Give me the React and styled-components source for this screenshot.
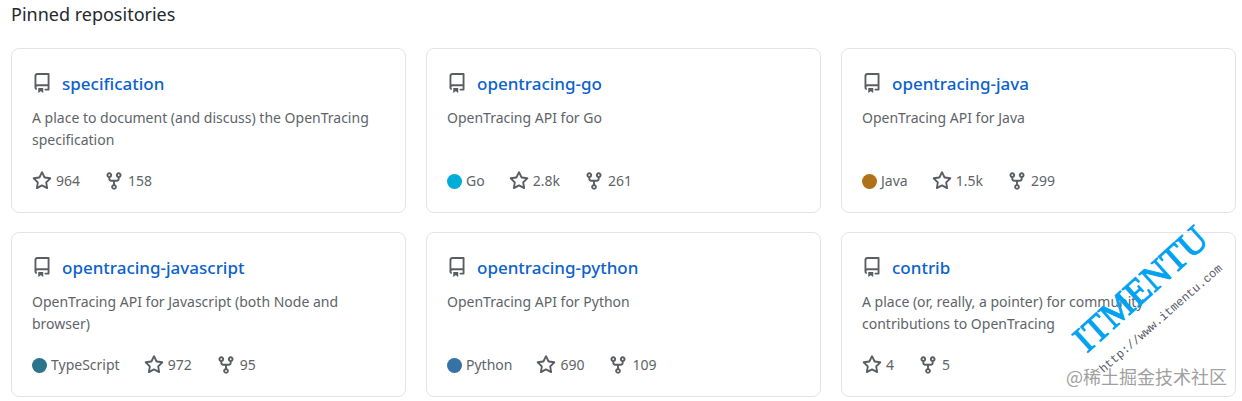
import React from "react";
import styled, { createGlobalStyle } from "styled-components";

const repos = [
  {
    name: "specification",
    description: "A place to document (and discuss) the OpenTracing specification",
    stars: "964",
    forks: "158",
  },
  {
    name: "opentracing-go",
    description: "OpenTracing API for Go",
    language: "Go",
    color: "#00add8",
    stars: "2.8k",
    forks: "261",
  },
  {
    name: "opentracing-java",
    description: "OpenTracing API for Java",
    language: "Java",
    color: "#b07219",
    stars: "1.5k",
    forks: "299",
  },
  {
    name: "opentracing-javascript",
    description: "OpenTracing API for Javascript (both Node and browser)",
    language: "TypeScript",
    color: "#2b7489",
    stars: "972",
    forks: "95",
  },
  {
    name: "opentracing-python",
    description: "OpenTracing API for Python",
    language: "Python",
    color: "#3572a5",
    stars: "690",
    forks: "109",
  },
  {
    name: "contrib",
    description:
      "A place (or, really, a pointer) for community contributions to OpenTracing",
    stars: "4",
    forks: "5",
  },
];

const icons = {
  repo: "M2 2.5A2.5 2.5 0 014.5 0h8.75a.75.75 0 01.75.75v12.5a.75.75 0 01-.75.75h-2.5a.75.75 0 110-1.5h1.75v-2h-8a1 1 0 00-.714 1.7.75.75 0 01-1.072 1.05A2.495 2.495 0 012 11.5v-9zm10.5-1V9h-8c-.356 0-.694.074-1 .208V2.5a1 1 0 011-1h8zM5 12.25v3.25a.25.25 0 00.4.2l1.45-1.087a.25.25 0 01.3 0L8.6 15.7a.25.25 0 00.4-.2v-3.25a.25.25 0 00-.25-.25h-3.5a.25.25 0 00-.25.25z",
  star: "M8 .25a.75.75 0 01.673.418l1.882 3.815 4.21.612a.75.75 0 01.416 1.279l-3.046 2.97.719 4.192a.75.75 0 01-1.088.791L8 12.347l-3.766 1.98a.75.75 0 01-1.088-.79l.72-4.194L.818 6.374a.75.75 0 01.416-1.28l4.21-.611L7.327.668A.75.75 0 018 .25zm0 2.445L6.615 5.5a.75.75 0 01-.564.41l-3.097.45 2.24 2.184a.75.75 0 01.216.664l-.528 3.084 2.769-1.456a.75.75 0 01.698 0l2.77 1.456-.53-3.084a.75.75 0 01.216-.664l2.24-2.183-3.096-.45a.75.75 0 01-.564-.41L8 2.694z",
  fork: "M5 3.25a.75.75 0 11-1.5 0 .75.75 0 011.5 0zm0 2.122a2.25 2.25 0 10-1.5 0v.878A2.25 2.25 0 005.75 8.5h1.5v2.128a2.251 2.251 0 101.5 0V8.5h1.5a2.25 2.25 0 002.25-2.25v-.878a2.25 2.25 0 10-1.5 0v.878a.75.75 0 01-.75.75h-4.5A.75.75 0 015 6.25v-.878zm3.75 7.378a.75.75 0 11-1.5 0 .75.75 0 011.5 0zm3-8.75a.75.75 0 100-1.5.75.75 0 000 1.5z",
};

function Icon({ name }) {
  return (
    <IconStyled viewBox="0 0 16 16" aria-hidden="true">
      <path fillRule="evenodd" d={icons[name]} />
    </IconStyled>
  );
}

function RepoCard({ repo }) {
  return (
    <Card>
      <CardHeader>
        <Icon name="repo" />
        <RepoLink href="#">{repo.name}</RepoLink>
      </CardHeader>
      <Description>{repo.description}</Description>
      <Stats>
        {repo.language && (
          <Language>
            <Dot $color={repo.color} />
            {repo.language}
          </Language>
        )}
        <StatLink href="#" aria-label={`${repo.stars} stars`}>
          <Icon name="star" />
          {repo.stars}
        </StatLink>
        <StatLink href="#" aria-label={`${repo.forks} forks`}>
          <Icon name="fork" />
          {repo.forks}
        </StatLink>
      </Stats>
    </Card>
  );
}

function App() {
  return (
    <Page>
      <GlobalStyle />
      <Heading>Pinned repositories</Heading>
      <Grid>
        {repos.map((repo) => (
          <RepoCard key={repo.name} repo={repo} />
        ))}
      </Grid>
      <Brand>ITMENTU</Brand>
      <BrandUrl>http://www.itmentu.com</BrandUrl>
      <Community>@稀土掘金技术社区</Community>
    </Page>
  );
}

const GlobalStyle = createGlobalStyle`
  * {
    box-sizing: border-box;
  }
  body {
    margin: 0;
    background: #fff;
    color: #24292e;
    font-family: "Noto Sans", "Open Sans", sans-serif;
    font-size: 14px;
  }
`;

const Page = styled.main`
  position: relative;
  padding: 0 6px 4px 11px;
  overflow: hidden;
`;

const Heading = styled.h2`
  margin: 0 0 20px;
  font-size: 18px;
  font-weight: 400;
  line-height: 28px;
`;

const Grid = styled.ol`
  display: grid;
  grid-template-columns: repeat(3, 1fr);
  gap: 19px 20px;
  margin: 0;
  padding: 0;
  list-style: none;
`;

const Card = styled.li`
  display: flex;
  flex-direction: column;
  padding: 20px;
  border: 1px solid #e1e4e8;
  border-radius: 8px;
`;

const CardHeader = styled.div`
  display: flex;
  align-items: center;
  gap: 10px;
  height: 28px;
  margin-bottom: 10px;
`;

const RepoLink = styled.a`
  color: #0b62ce;
  font-size: 17px;
  font-weight: 500;
  text-decoration: none;
`;

const Description = styled.p`
  flex: 1;
  margin: 0 0 19px;
  color: #606469;
  line-height: 22px;
`;

const Stats = styled.div`
  display: flex;
  align-items: center;
  gap: 24px;
  color: #606469;
  line-height: 22px;
`;

const Language = styled.span`
  display: flex;
  align-items: center;
  gap: 4px;
`;

const Dot = styled.span`
  width: 15px;
  height: 15px;
  border-radius: 50%;
  background: ${(props) => props.$color};
`;

const StatLink = styled.a`
  display: flex;
  align-items: center;
  gap: 4px;
  color: inherit;
  text-decoration: none;
`;

const IconStyled = styled.svg`
  flex: none;
  width: 20px;
  height: 20px;
  fill: #5a5e63;
`;

const Overlay = styled.span`
  position: absolute;
  line-height: 1;
  white-space: nowrap;
  pointer-events: none;
`;

const Brand = styled(Overlay)`
  right: 19px;
  bottom: 94px;
  color: #00a2f2;
  font-family: "Liberation Serif", serif;
  font-size: 37px;
  -webkit-text-stroke: 1px #00a2f2;
  transform: rotate(-42deg);
`;

const BrandUrl = styled(Overlay)`
  right: 2px;
  bottom: 76px;
  color: #5a5a68;
  font-family: "Liberation Mono", monospace;
  font-size: 12px;
  transform: rotate(-41deg);
`;

const Community = styled(Overlay)`
  right: 15px;
  bottom: 16px;
  color: #a0a0a0;
  font-family: "Noto Sans CJK SC", sans-serif;
  font-size: 18px;
  text-shadow: 1px 1px 1px #fff;
`;

export default App;
